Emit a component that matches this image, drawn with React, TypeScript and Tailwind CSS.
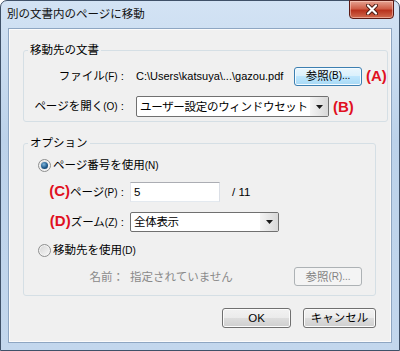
import React from 'react';

const font = "font-['Liberation_Sans','Noto_Sans_CJK_JP',sans-serif]";

const Arrow = () => (
  <svg width="7" height="4" viewBox="0 0 7 4">
    <path d="M0 0h7L3.5 4z" fill="#1a1a1a" />
  </svg>
);

const Mark = ({ children }: { children: React.ReactNode }) => (
  <span className="font-['Liberation_Sans',sans-serif] text-[15px] font-bold leading-[16px] text-[#e0101f]">
    {children}
  </span>
);

const Radio = ({ checked }: { checked?: boolean }) => (
  <span className="flex h-[13px] w-[13px] items-center justify-center rounded-full border border-[#8e8f8f] bg-[linear-gradient(135deg,#d4d4d4,#f9f9f9)] shadow-[inset_0_0_0_1px_#f4f4f4]">
    {checked && (
      <span className="h-[7px] w-[7px] rounded-full bg-[radial-gradient(circle_at_40%_35%,#7fb6dc,#1f5a8c_55%,#0d2f50)]" />
    )}
  </span>
);

const Combo = ({ text, className }: { text: string; className: string }) => (
  <div className={`flex items-center overflow-hidden rounded-[2px] border border-[#707070] bg-white ${className}`}>
    <span className="flex-1 overflow-hidden whitespace-nowrap pl-[3px] text-[11.5px] leading-[16px] tracking-[-0.3px] text-black">
      {text}
    </span>
    <span className="flex h-full w-[18px] shrink-0 items-center justify-center bg-[linear-gradient(to_right,#f4f4f4,#d8d8d8)]">
      <Arrow />
    </span>
  </div>
);

export default function App() {
  return (
    <div className={`h-[351px] w-[400px] bg-white ${font}`}>
      <div className="flex h-[351px] w-[400px] flex-col rounded-t-[7px] border border-[#3f5168] bg-[linear-gradient(to_bottom,#d3e3f4,#bcd2ea_40%,#c3d7ed)]">
        {/* title bar */}
        <div className="flex h-[27px] items-start justify-between">
          <span className="pl-[6px] pt-[5px] text-[11.5px] leading-[16px] text-[#111]">別の文書内のページに移動</span>
          <div className="-mt-px mr-[5px] flex h-[19px] w-[45px] items-center justify-center rounded-b-[4px] border border-[#5b1a14] bg-[linear-gradient(to_bottom,#e6a392,#cf5e48_45%,#b8321d_55%,#d06a4e)] shadow-[inset_0_0_0_1px_rgba(255,220,210,0.5)]">
            <svg width="12" height="11" viewBox="0 0 12 11">
              <path d="M2 1.5l8 8M10 1.5l-8 8" stroke="#4a1a12" strokeWidth="4" strokeLinecap="round" />
              <path d="M2 1.5l8 8M10 1.5l-8 8" stroke="#ffffff" strokeWidth="2.2" strokeLinecap="round" />
            </svg>
          </div>
        </div>

        {/* client */}
        <div className="mx-[7px] flex h-[315px] flex-col border border-[#8ea6c2] bg-[#f0f0f0] pl-[14px] pr-[15px] shadow-[inset_0_0_0_1px_#fbfbfb]">
          <fieldset className="mt-[13px] rounded-[3px] border border-[#d5dfe5] pb-[4px]">
            <legend className="ml-[4px] px-[2px] text-[11.5px] leading-[16px] text-black">移動先の文書</legend>
            <div className="mt-[8px] flex h-[20px] items-center">
              <span className="w-[100px] text-right text-[11.5px] leading-[16px] text-black">
                ファイル<span className="text-[10px]">(F)</span> :
              </span>
              <span className="ml-[12px] w-[158px] text-[11px] leading-[16px] text-black">C:\Users\katsuya\...\gazou.pdf</span>
              <div className="flex h-[19px] w-[68px] items-center justify-center rounded-[3px] border border-[#3c7fb1] bg-[linear-gradient(to_bottom,#eaf6fd,#d9f0fc_50%,#bee6fd_50%,#a7d9f5)] text-[11.5px] leading-[16px] text-black shadow-[inset_0_0_0_1px_#f4fbff]">
                参照<span className="text-[10px]">(B)...</span>
              </div>
              <span className="ml-[4px]">
                <Mark>(A)</Mark>
              </span>
            </div>
            <div className="mt-[10px] flex h-[21px] items-center">
              <span className="w-[100px] text-right text-[11.5px] leading-[16px] text-black">
                ページを開く<span className="text-[10px]">(O)</span> :
              </span>
              <Combo text="ユーザー設定のウィンドウセット" className="ml-[12px] h-[21px] w-[193px]" />
              <span className="ml-[4px]">
                <Mark>(B)</Mark>
              </span>
            </div>
          </fieldset>

          <fieldset className="mt-[13px] rounded-[3px] border border-[#d5dfe5] pb-[9px]">
            <legend className="ml-[4px] px-[2px] text-[11.5px] leading-[16px] text-black">オプション</legend>
            <div className="mt-[6px] flex h-[16px] items-center pl-[14px]">
              <Radio checked />
              <span className="ml-[2px] text-[11.5px] leading-[16px] text-black">
                ページ番号を使用<span className="text-[10px]">(N)</span>
              </span>
            </div>
            <div className="mt-[9px] flex h-[20px] items-center">
              <span className="w-[100px] text-right text-[11.5px] leading-[16px] text-black">
                <Mark>(C)</Mark>ページ<span className="text-[10px]">(P)</span> :
              </span>
              <div className="ml-[6px] flex h-[20px] w-[90px] items-center border border-[#abadb3] border-b-[#e3e9ef] border-l-[#e2e3ea] border-r-[#dbdfe6] bg-white pl-[3px] text-[11.5px] leading-[16px] text-black">
                5
              </div>
              <span className="ml-[12px] text-[11.5px] leading-[16px] text-black">/ 11</span>
            </div>
            <div className="mt-[10px] flex h-[20px] items-center">
              <span className="w-[100px] text-right text-[11.5px] leading-[16px] text-black">
                <Mark>(D)</Mark>ズーム<span className="text-[10px]">(Z)</span> :
              </span>
              <Combo text="全体表示" className="ml-[6px] h-[20px] w-[149px]" />
            </div>
            <div className="mt-[10px] flex h-[16px] items-center pl-[14px]">
              <Radio />
              <span className="ml-[2px] text-[11.5px] leading-[16px] text-black">
                移動先を使用<span className="text-[10px]">(D)</span>
              </span>
            </div>
            <div className="mt-[9px] flex h-[19px] items-center">
              <span className="w-[100px] text-right text-[11.5px] leading-[16px] text-[#8a8a8a]">名前：</span>
              <span className="ml-[6px] w-[164px] text-[11.5px] leading-[16px] text-[#8a8a8a]">指定されていません</span>
              <div className="flex h-[19px] w-[68px] items-center justify-center rounded-[3px] border border-[#adb2b5] bg-[#f4f4f4] text-[11.5px] leading-[16px] text-[#838383]">
                参照<span className="text-[10px]">(R)...</span>
              </div>
            </div>
          </fieldset>

          <div className="mt-[12px] flex justify-end gap-[12px]">
            <div className="flex h-[20px] w-[69px] items-center justify-center rounded-[3px] border border-[#707070] bg-[linear-gradient(to_bottom,#f2f2f2,#ebebeb_50%,#dddddd_50%,#cfcfcf)] text-[11.5px] leading-[16px] text-black shadow-[inset_0_0_0_1px_#fcfcfc]">
              OK
            </div>
            <div className="flex h-[20px] w-[73px] items-center justify-center rounded-[3px] border border-[#707070] bg-[linear-gradient(to_bottom,#f2f2f2,#ebebeb_50%,#dddddd_50%,#cfcfcf)] text-[11.5px] leading-[16px] text-black shadow-[inset_0_0_0_1px_#fcfcfc]">
              キャンセル
            </div>
          </div>
        </div>
      </div>
    </div>
  );
}
